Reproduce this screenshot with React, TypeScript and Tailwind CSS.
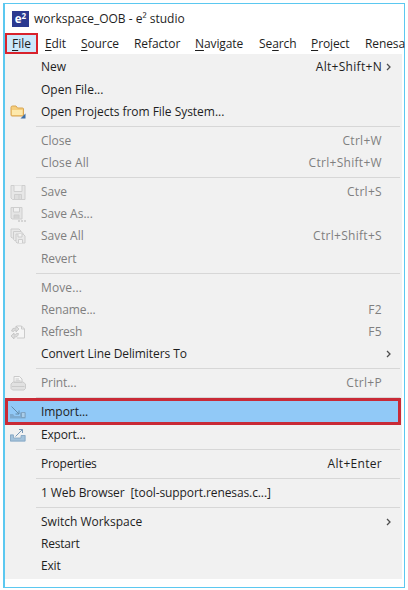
import React from "react";

type IconName = "folder" | "save" | "saveAs" | "saveAll" | "refresh" | "print" | "import" | "export";

type Entry = {
  label: string;
  track?: string;
  shortcut?: string;
  arrow?: boolean;
  disabled?: boolean;
  icon?: IconName;
  highlighted?: boolean;
};

const groups: Entry[][] = [
  [
    { label: "New", shortcut: "Alt+Shift+N", arrow: true },
    { label: "Open File..." },
    { label: "Open Projects from File System...", track: "tracking-[-0.03px]", icon: "folder" },
  ],
  [
    { label: "Close", shortcut: "Ctrl+W", disabled: true },
    { label: "Close All", track: "tracking-[0.1px]", shortcut: "Ctrl+Shift+W", disabled: true },
  ],
  [
    { label: "Save", shortcut: "Ctrl+S", disabled: true, icon: "save" },
    { label: "Save As...", disabled: true, icon: "saveAs" },
    { label: "Save All", shortcut: "Ctrl+Shift+S", disabled: true, icon: "saveAll" },
    { label: "Revert", track: "tracking-[-0.1px]", disabled: true },
  ],
  [
    { label: "Move...", track: "tracking-[0.1px]", disabled: true },
    { label: "Rename...", track: "tracking-[-0.1px]", shortcut: "F2", disabled: true },
    { label: "Refresh", track: "tracking-[-0.25px]", shortcut: "F5", disabled: true, icon: "refresh" },
    { label: "Convert Line Delimiters To", track: "tracking-[-0.08px]", arrow: true },
  ],
  [{ label: "Print...", track: "tracking-[-0.1px]", shortcut: "Ctrl+P", disabled: true, icon: "print" }],
  [
    { label: "Import...", track: "tracking-[-0.05px]", icon: "import", highlighted: true },
    { label: "Export...", track: "tracking-[-0.2px]", icon: "export" },
  ],
  [{ label: "Properties", track: "tracking-[-0.25px]", shortcut: "Alt+Enter" }],
  [{ label: "1 Web Browser  [tool-support.renesas.c...]", track: "tracking-[-0.1px]" }],
  [
    { label: "Switch Workspace", arrow: true },
    { label: "Restart", track: "tracking-[-0.2px]" },
    { label: "Exit", track: "tracking-[-0.2px]" },
  ],
];

function MenuIcon({ name }: { name: IconName }) {
  return (
    <svg width="18" height="18" viewBox="0 0 18 18" fill="none" className="block">
      {name === "folder" && (
        <>
          <path d="M2 4.5Q2 3 3.5 3H7L8.5 5H13.5Q14.5 5 14.5 6V13H3Q2 13 2 12Z" fill="#f6ce7c" stroke="#d8a550" />
          <path d="M3 7H13.5V12H3Z" fill="#fde9ac" />
          <path d="M16.5 10.5V15.5H11.5Z" fill="#3c6fa8" />
        </>
      )}
      {name === "save" && (
        <g stroke="#cfcfcf">
          <path d="M2 2.5H16V16.5H3.5L2 15Z" fill="#e7e7e7" />
          <path d="M5 2.5V8.5H13V2.5" fill="#f1f1f1" />
          <path d="M5.5 16V11.5H12.5V16M10 12V16" fill="#dedede" />
        </g>
      )}
      {name === "saveAs" && (
        <g stroke="#cecece">
          <path d="M2 2.5H13V14H3L2 13Z" fill="#e5e5e5" />
          <path d="M4.5 3V7H10.5V3" fill="#f1f1f1" />
          <path d="M5 13.5V10H10V13.5" fill="#d5d5d5" />
          <path d="M9 16H17" stroke="#b8b8b8" strokeWidth="1.2" strokeDasharray="2 1" />
        </g>
      )}
      {name === "saveAll" && (
        <g stroke="#cdcdcd" fill="#e9e9e9">
          <path d="M2 2H10L12 4V11H3L2 10Z" />
          <path d="M4.5 4.5H12L14 6.5V13.5H5.5L4.5 12.5Z" />
          <path d="M7 7H14L16 9V16H8L7 15Z" />
          <path d="M9 7V10H13V7M9.5 16V12.5H13.5V16" fill="#f3f3f3" />
        </g>
      )}
      {name === "refresh" && (
        <g stroke="#cbcbcb">
          <path d="M7.5 3H12.5L15.5 6V15H8" fill="#f5f5f5" />
          <path d="M12.5 3V6H15.5" />
          <path d="M2.5 8Q3 4.5 7 5V3L10 6L7 9V7Q5 7 4.5 8.5ZM9.5 10.5Q9 14.5 5 14V16L2 13L5 10V12Q7 12 7.5 10.5Z" fill="#dcdcdc" stroke="#c2c2c2" strokeWidth=".8" />
        </g>
      )}
      {name === "print" && (
        <g stroke="#cacaca">
          <path d="M5 9V2.5H10.5L13 5V9" fill="#f6f6f6" />
          <path d="M2 10L4 8H14L16.5 10V14.5L15 16H3.5L2 14.5Z" fill="#e1e1e1" />
          <path d="M3 12.5H15.5M5 8.5H13M6.5 5H10M6.5 6.8H11.5" />
        </g>
      )}
      {name === "import" && (
        <>
          <path d="M1 11H4L5.5 13H11V9.5H16.5V15.5H1Z" fill="#7eabd0" />
          <path d="M2.5 3.5L10 11M10 7.5V11H6.5" stroke="#628ba9" />
          <path d="M12.5 9.5H16V14.5H12.5Z" fill="#a9cde9" stroke="#7798b5" strokeWidth=".7" />
        </>
      )}
      {name === "export" && (
        <>
          <path d="M1 8.5H4.5V12H12V9H16.5V15.5H1Z" fill="#a3c2db" />
          <path d="M1.5 9H4.5V12H12V9.5H16V15H1.5Z" stroke="#86a6c2" strokeWidth=".8" />
          <path d="M6.5 10.5L13.5 3.5M10 3.5H13.5V7" stroke="#7697b5" />
        </>
      )}
    </svg>
  );
}

function Chevron() {
  return (
    <svg width="6" height="8" viewBox="0 0 6 8" fill="none" className="block">
      <path d="M1 1L4 4L1 7" stroke="#4e4e4e" strokeWidth="1.3" />
    </svg>
  );
}

function MenuRow({ item }: { item: Entry }) {
  return (
    <div className={`relative flex h-[22.2px] items-center ${item.disabled ? "text-[#7f7f7f]" : "text-[#1e1e1e]"}`}>
      {item.highlighted && (
        <div className="absolute -top-[3.7px] left-0 h-[27px] w-[396px] border-[3px] border-[#c92a36] bg-[#91c9f7]" />
      )}
      <div className="relative w-[36px] shrink-0 pl-[4px]">{item.icon && <MenuIcon name={item.icon} />}</div>
      <span className={`relative whitespace-pre ${item.track ?? ""}`}>{item.label}</span>
      <span className="relative ml-auto whitespace-pre tracking-[0.3px]">{item.shortcut}</span>
      <span className="flex w-[20px] shrink-0 pl-[4px]">{item.arrow && <Chevron />}</span>
    </div>
  );
}

const bar: { pre: string; key: string; post: string; box: string }[] = [
  { pre: "", key: "E", post: "dit", box: "w-[36px]" },
  { pre: "", key: "S", post: "ource", box: "w-[53px]" },
  { pre: "Refactor", key: "", post: "", box: "w-[61px]" },
  { pre: "", key: "N", post: "avigate", box: "w-[64px]" },
  { pre: "Se", key: "a", post: "rch", box: "w-[52px]" },
  { pre: "", key: "P", post: "roject", box: "w-[54px]" },
  { pre: "Renesa", key: "", post: "", box: "w-[40px]" },
];

export default function App() {
  return (
    <div className="h-[590px] w-[408px] overflow-hidden bg-white pl-[3px] pt-[3px] font-['Open_Sans',sans-serif] text-[12px] leading-[16px] text-[#1e1e1e]">
      <div className="h-[585px] w-[402px] border border-l-2 border-[#5bc8f0] bg-white">
        <div className="flex h-[29px] items-center pl-[7px]">
          <span className="flex h-[16px] w-[17px] items-center justify-center bg-[#2b3990] text-[11.5px] font-bold text-white">
            e<span className="-mt-[5px] text-[8px]">2</span>
          </span>
          <span className="ml-[5px] whitespace-pre">workspace_OOB - e² studio</span>
        </div>
        <div className="flex h-[21px] items-center whitespace-pre">
          <span className="flex h-[21px] w-[33px] shrink-0 items-center justify-center border-2 border-[#d9222c] bg-[#cce8fb]">
            <span className="underline underline-offset-2">F</span>ile
          </span>
          <span className="w-[7px] shrink-0" />
          {bar.map((m) => (
            <span key={m.pre + m.key + m.post} className={`shrink-0 tracking-[-0.1px] ${m.box}`}>
              {m.pre}
              <span className="underline underline-offset-2">{m.key}</span>
              {m.post}
            </span>
          ))}
        </div>
        <div className="h-[525px] w-[397px] bg-[#f1f1f1] pt-[2.3px]">
          {groups.map((items, i) => (
            <React.Fragment key={i}>
              {i > 0 && (
                <div className="flex h-[6.9px] items-center pl-[31px] pr-[2px]">
                  <div className="h-px w-full bg-[#d7d7d7]" />
                </div>
              )}
              {items.map((item) => (
                <MenuRow key={item.label} item={item} />
              ))}
            </React.Fragment>
          ))}
        </div>
      </div>
    </div>
  );
}
